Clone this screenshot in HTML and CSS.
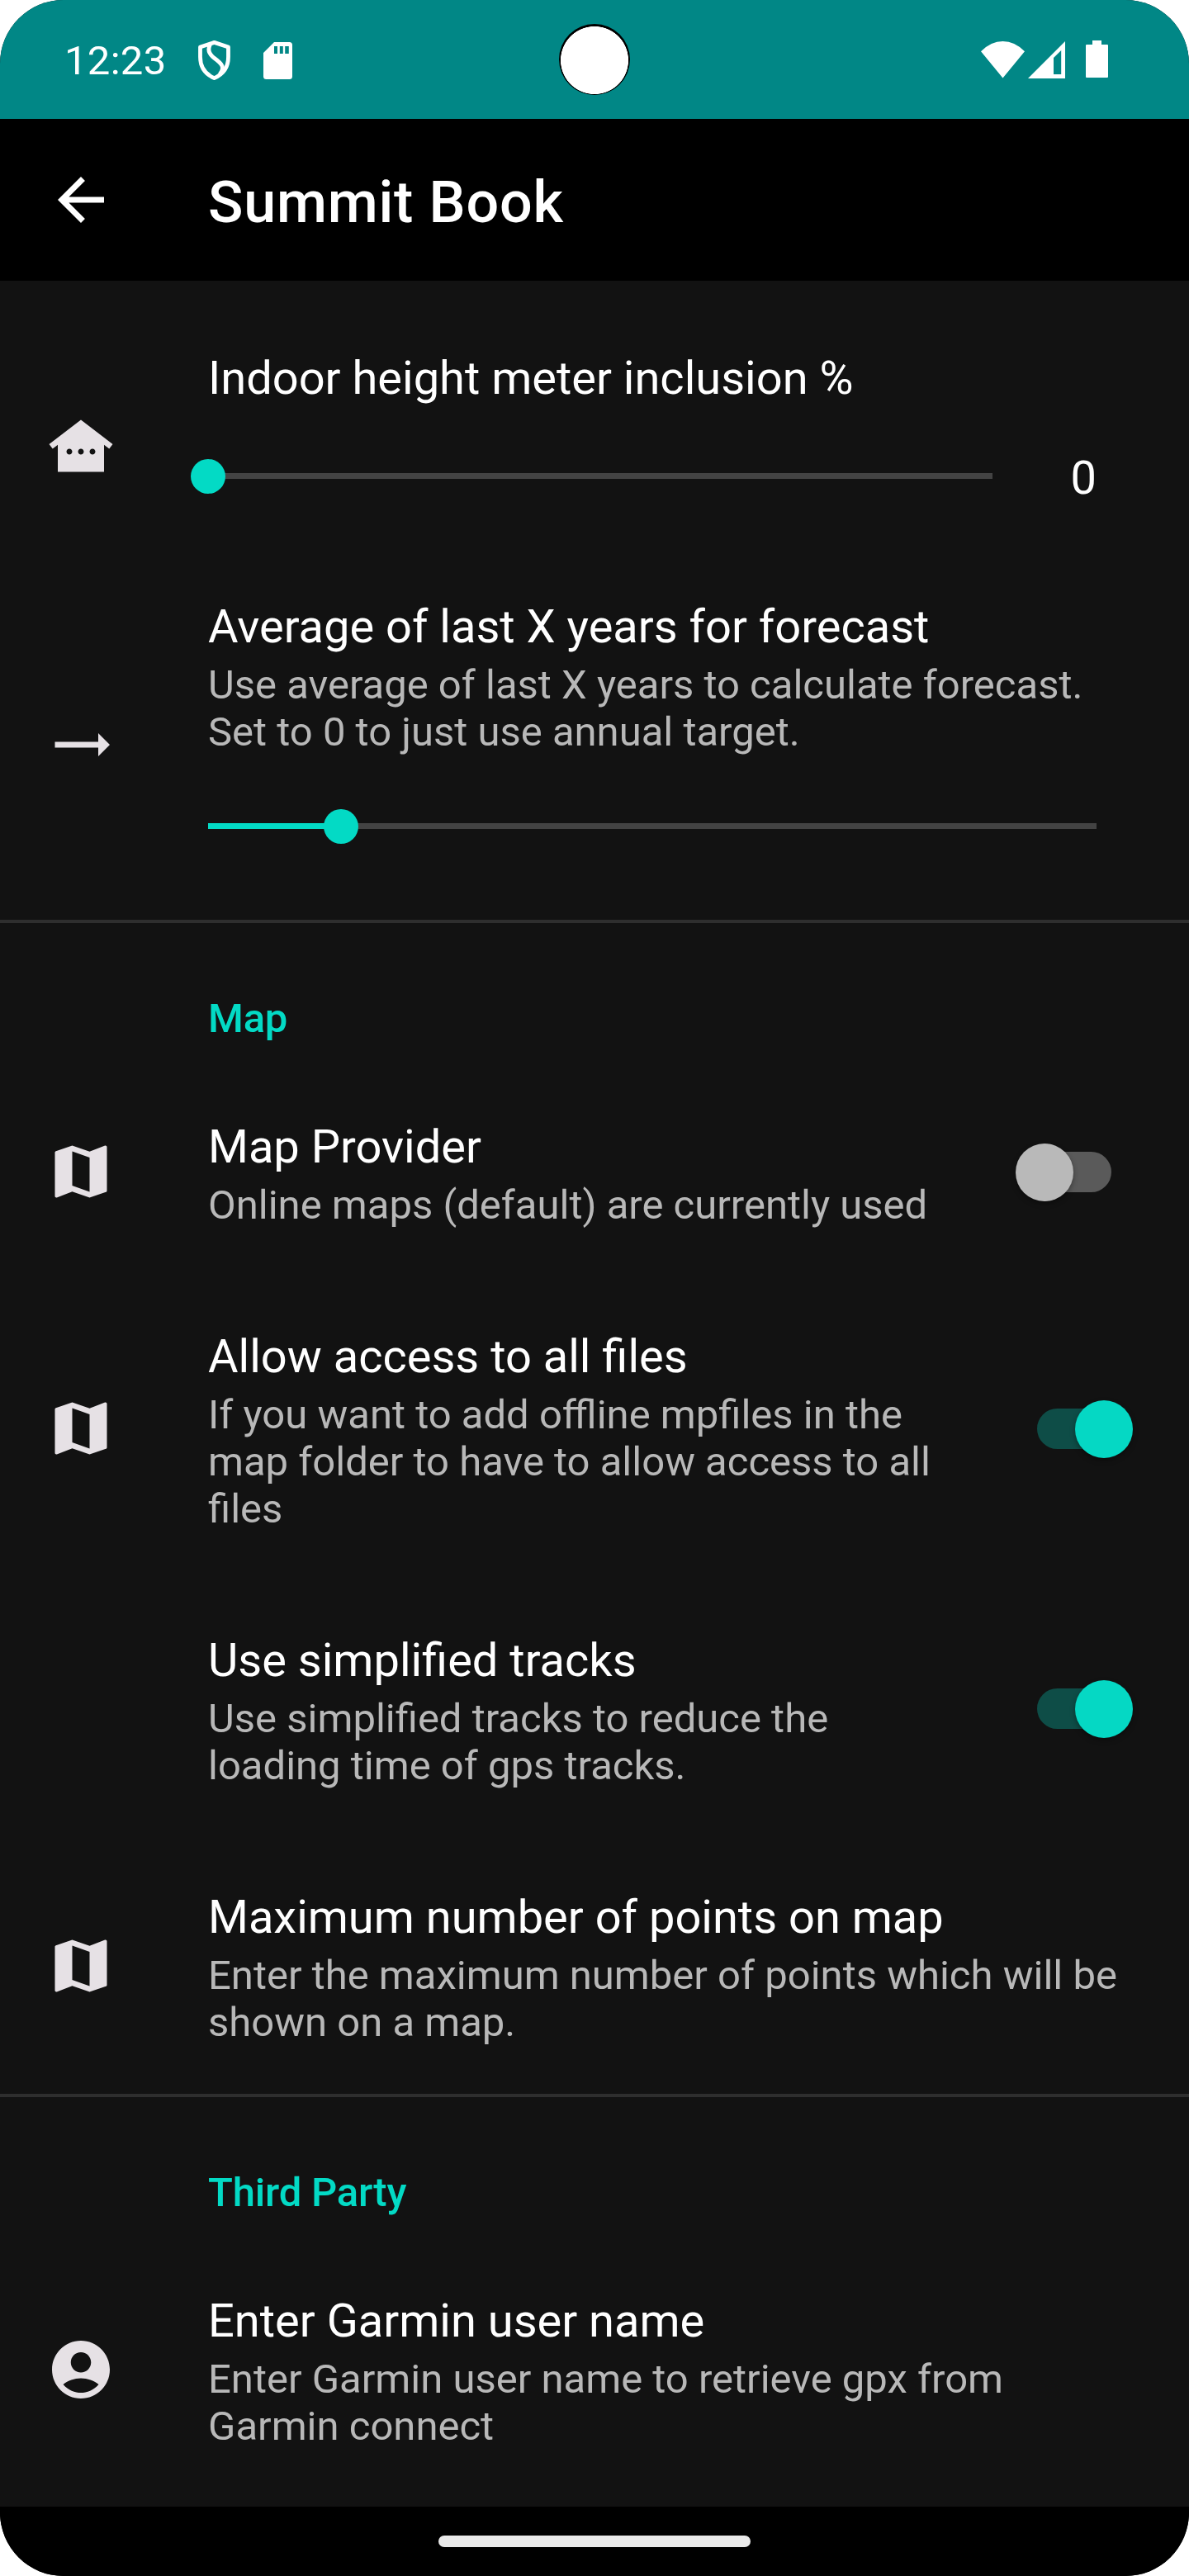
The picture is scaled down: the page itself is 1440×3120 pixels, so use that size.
FILE: index.html
```html
<!DOCTYPE html>
<html lang="en">
<head>
<meta charset="utf-8">
<title>Summit Book</title>
<link rel="stylesheet" href="styles.css">
</head>
<body>
<svg class="sprite" aria-hidden="true">
  <symbol id="map" viewBox="0 0 24 24"><path d="M20.5 3l-.16.03L15 5.1 9 3 3.36 4.9c-.21.07-.36.25-.36.48V20.5c0 .28.22.5.5.5l.16-.03L9 18.9l6 2.1 5.64-1.9c.21-.07.36-.25.36-.48V3.5c0-.28-.22-.5-.5-.5zM15 19l-6-2.11V5l6 2.11V19z"/></symbol>
</svg>
<div class="phone">
  <div class="status">
    <span class="time">12:23</span>
    <svg class="shield" width="42" height="50" viewBox="0 0 42 50" fill="none" stroke="#fff" stroke-width="4.800" stroke-linejoin="round"><path d="M20.500 2.400L37.500 8V20C37.500 33 31 41 20.500 45.600C10 41 3.500 33 3.500 20V8Z"/><path d="M15.500 5C12 11 14 16 20 21C28 27 35 32 27 41"/></svg>
    <svg class="sd" width="35" height="45" viewBox="0 0 35 45" fill="#fff"><path fill-rule="evenodd" d="M13 0H31.500Q35 0 35 3.500V41.500Q35 45 31.500 45H3.500Q0 45 0 41.500V13ZM13 5V14H17V5ZM19.800 5V14H23.800V5ZM26.200 5V14H30.800V5Z"/></svg>
    <span class="camera"></span>
    <svg class="wifi" width="54" height="45" viewBox="0 0 54 45" fill="#fff"><path d="M0 12.300Q12 0 26.500 0T53 12.300L26.500 44.500Z"/></svg>
    <svg class="signal" width="45" height="45" viewBox="0 0 45 45" fill="#fff"><path fill-rule="evenodd" d="M45 0V45H0ZM40.200 11L31 20V40H40.200Z"/></svg>
    <svg class="battery" width="27" height="45" viewBox="0 0 27 45" fill="#fff"><path d="M8 0H19V5H26Q27 5 27 6V44Q27 45 26 45H1Q0 45 0 44V6Q0 5 1 5H8Z"/></svg>
  </div>
  <header class="toolbar">
    <svg class="icon back" viewBox="0 0 24 24"><path d="M20 11H7.830l5.590-5.590L12 4l-8 8 8 8 1.410-1.410L7.830 13H20v-2z"/></svg>
    <h1>Summit Book</h1>
  </header>
  <main class="list">
    <section class="row seek indoor">
      <svg class="icon" viewBox="0 0 24 24"><path d="M12 3L1 11.400l1.210 1.590L4 11.620V21h16v-9.380l1.790 1.360L23 11.400 12 3zM8 15c-.55 0-1-.45-1-1s.45-1 1-1 1 .45 1 1-.45 1-1 1zm4 0c-.55 0-1-.45-1-1s.45-1 1-1 1 .45 1 1-.45 1-1 1zm4 0c-.55 0-1-.45-1-1s.45-1 1-1 1 .45 1 1-.45 1-1 1z"/></svg>
      <div class="text">
        <h2>Indoor height meter inclusion %</h2>
        <div class="slider-line">
          <div class="slider"><span class="fill" style="width:0%"></span><span class="knob" style="left:0%"></span></div>
          <span class="value">0</span>
        </div>
      </div>
    </section>
    <section class="row seek forecast">
      <svg class="icon" viewBox="0 0 24 24"><path d="M22 12l-4-4v3H3v2h15v3z"/></svg>
      <div class="text">
        <h2>Average of last X years for forecast</h2>
        <p>Use average of last X years to calculate forecast.<br>Set to 0 to just use annual target.</p>
        <div class="slider-line">
          <div class="slider"><span class="fill" style="width:15%"></span><span class="knob" style="left:15%"></span></div>
        </div>
      </div>
    </section>
    <h3 class="category">Map</h3>
    <section class="row">
      <svg class="icon"><use href="#map"/></svg>
      <div class="text">
        <h2>Map Provider</h2>
        <p>Online maps (default) are currently used</p>
      </div>
      <span class="switch off"></span>
    </section>
    <section class="row">
      <svg class="icon"><use href="#map"/></svg>
      <div class="text">
        <h2>Allow access to all files</h2>
        <p>If you want to add offline mpfiles in the<br>map folder to have to allow access to all<br>files</p>
      </div>
      <span class="switch on"></span>
    </section>
    <section class="row">
      <span class="icon"></span>
      <div class="text">
        <h2>Use simplified tracks</h2>
        <p>Use simplified tracks to reduce the<br>loading time of gps tracks.</p>
      </div>
      <span class="switch on"></span>
    </section>
    <section class="row">
      <svg class="icon"><use href="#map"/></svg>
      <div class="text">
        <h2>Maximum number of points on map</h2>
        <p>Enter the maximum number of points which will be<br>shown on a map.</p>
      </div>
    </section>
    <h3 class="category">Third Party</h3>
    <section class="row">
      <svg class="icon" viewBox="0 0 24 24"><path d="M12 2C6.480 2 2 6.480 2 12s4.480 10 10 10 10-4.480 10-10S17.520 2 12 2zm0 4c1.930 0 3.500 1.570 3.500 3.500S13.930 13 12 13s-3.500-1.570-3.500-3.500S10.070 6 12 6zm0 14c-2.030 0-4.430-.82-6.140-2.880C7.550 15.800 9.680 15 12 15s4.450.8 6.140 2.120C16.430 19.180 14.030 20 12 20z"/></svg>
      <div class="text">
        <h2>Enter Garmin user name</h2>
        <p>Enter Garmin user name to retrieve gpx from<br>Garmin connect</p>
      </div>
    </section>
  </main>
  <footer class="nav"><span class="handle"></span></footer>
</div>
</body>
</html>
```
FILE: styles.css
```css
* { box-sizing: border-box; }
body { margin: 0; background: #fff; font-family: Roboto, "Liberation Sans", sans-serif; }
h1, h2, h3, p { margin: 0; }
.sprite { display: none; }
.phone {
  width: 1440px; height: 3120px; overflow: hidden;
  display: flex; flex-direction: column;
  background: #121212; color: #fff; border-radius: 77px;
}
.status {
  position: relative; height: 144px; flex: none;
  display: flex; align-items: flex-start;
  padding: 49px 98px 0 78px; background: #018786;
}
.time { width: 161px; font-size: 49px; line-height: 50px; letter-spacing: .3px; }
.sd { margin: 2px auto 0 38px; }
.wifi { margin-top: 1px; }
.signal { margin: 1px 25px 0 3px; }
.camera {
  position: absolute; left: 677px; top: 29px; width: 86px; height: 86px;
  border-radius: 50%; background: radial-gradient(circle at 43px 44px, #fff 40.700px, #000 41.300px);
}
.toolbar {
  height: 196px; flex: none; display: flex; align-items: center;
  padding-left: 56px; background: #000;
}
.toolbar h1 { font-size: 70px; line-height: 82px; font-weight: 500; letter-spacing: .8px; padding-top: 5px; }
.icon { width: 84px; height: 84px; flex: none; fill: #e6e1e5; margin-right: 112px; }
.icon.back { fill: #fff; }
.list { flex: 1; overflow: hidden; padding-top: 49px; }
.row { display: flex; align-items: center; padding: 0 56px; }
.text { flex: 1; padding: 64px 0 58px; white-space: nowrap; }
h2 { font-size: 56px; line-height: 66px; font-weight: 400; }
p { font-size: 49px; line-height: 57px; color: #b8b8b8; padding-top: 9px; }
.seek .text { align-self: flex-start; padding: 36px 56px 0 0; }
.indoor { height: 301px; }
.forecast { height: 424px; }
.slider-line { display: flex; align-items: center; height: 66px; margin-top: 52px; }
.indoor .slider-line { margin-top: 55px; }
.slider { position: relative; flex: 1; height: 7px; background: #434343; }
.indoor .slider { margin-top: -6px; }
.fill { display: block; height: 7px; background: #03dac5; }
.knob {
  position: absolute; top: -17px; width: 42px; height: 42px; margin-left: -21px;
  border-radius: 50%; background: #03dac5;
}
.value { width: 126px; text-align: right; font-size: 56px; line-height: 66px; }
.category {
  height: 178px; border-top: 4px solid #2e2e2e; padding: 87px 0 0 252px;
  font-size: 49px; line-height: 57px; font-weight: 500; letter-spacing: -.2px; color: #03dac5;
}
.switch {
  position: relative; width: 90px; height: 49px; flex: none; margin-right: 38px;
  border-radius: 25px; background: #5a5a5a;
}
.switch::after {
  content: ""; position: absolute; top: -10px; left: -26px; width: 70px; height: 70px;
  border-radius: 50%; background: #b9b9b9; box-shadow: 0 3px 6px rgba(0, 0, 0, .35);
}
.switch.on { background: #0e4d47; }
.switch.on::after { left: 46px; background: #05d8c4; }
.nav { height: 84px; flex: none; display: flex; justify-content: center; align-items: center; background: #000; }
.handle { width: 378px; height: 14px; border-radius: 7px; background: #eaeaea; }
```
